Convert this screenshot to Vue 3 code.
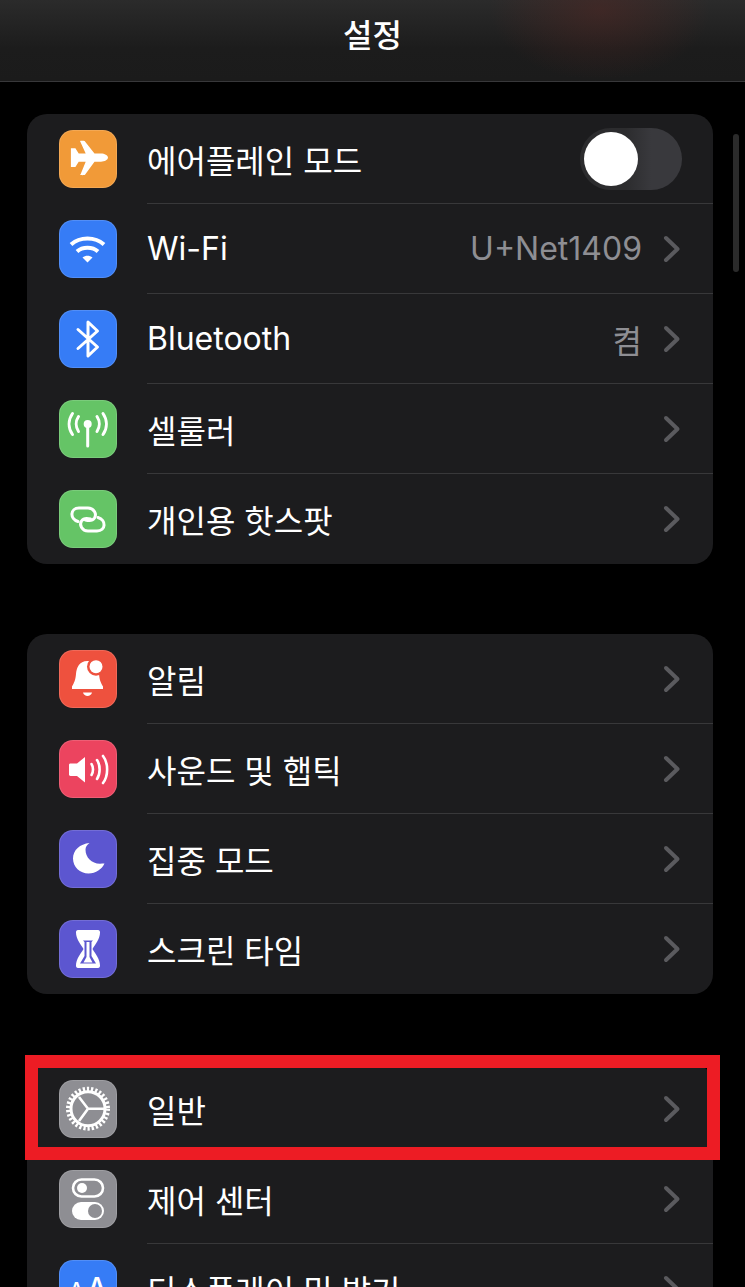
<script setup>
const groups = [
  [
    { icon: 'plane', color: '#f19a38', label: '에어플레인 모드', toggle: true },
    { icon: 'wifi', color: '#367cf6', label: 'Wi-Fi', value: 'U+Net1409' },
    { icon: 'bluetooth', color: '#367cf6', label: 'Bluetooth', value: '켬' },
    { icon: 'cell', color: '#65c466', label: '셀룰러' },
    { icon: 'link', color: '#65c466', label: '개인용 핫스팟' }
  ],
  [
    { icon: 'bell', color: '#ee513e', label: '알림' },
    { icon: 'sound', color: '#ec445f', label: '사운드 및 햅틱' },
    { icon: 'moon', color: '#5c56d0', label: '집중 모드' },
    { icon: 'hourglass', color: '#5c56d0', label: '스크린 타임' }
  ],
  [
    { icon: 'gear', color: '#8e8e93', label: '일반' },
    { icon: 'switches', color: '#8e8e93', label: '제어 센터' },
    { icon: 'display', color: '#367cf6', label: '디스플레이 및 밝기' }
  ]
];
</script>

<template>
  <div class="screen">
    <header class="nav">설정</header>

    <section v-for="(group, g) in groups" :key="g" class="group">
      <div v-for="row in group" :key="row.label" class="row">
        <div class="icon" :style="{ background: row.color }">
          <svg viewBox="0 0 58 58" width="58" height="58">
            <path v-if="row.icon === 'plane'" fill="#fff" d="M49 27.5c0 2.300-3.500 4.200-7 4.200h-6.500L26 44.800c-.4.400-4.600.5-4.600 0l5.300-13.100h-7l-3.300 5.200h-4.500V18.300h4.500l3.300 5.200h7L21 11c0-.5 4.200-.4 4.600 0l9.900 12.500H42c3.500 0 7 1.700 7 4z" />

            <g v-else-if="row.icon === 'wifi'" fill="none" stroke="#fff" stroke-width="4">
              <path d="M12 24.500C21 16.500 36 16.500 45 24.500" />
              <path d="M18 31.500C23.500 26.500 33.500 26.500 39 31.500" />
              <path fill="#fff" stroke="none" d="M23.500 37.500C26.500 35.200 30.500 35.200 33.500 37.500L28.500 42.500z" />
            </g>

            <path v-else-if="row.icon === 'bluetooth'" fill="none" stroke="#fff" stroke-width="3" stroke-linejoin="round" stroke-linecap="round" d="M19 19.500L38.500 37 29 46V12l9.500 9L19 38.500" />

            <g v-else-if="row.icon === 'cell'" fill="none" stroke="#fff" stroke-width="3" stroke-linecap="round">
              <circle cx="28.700" cy="24" r="4" fill="#fff" stroke="none" />
              <path d="M28.700 25V46" />
              <path d="M19.500 16.500C16.500 21 16.500 27 19.500 31.500" />
              <path d="M38 16.500C41 21 41 27 38 31.500" />
              <path d="M13.500 13.500C9 20 9 28 13.500 34.500" />
              <path d="M44 13.500C48.500 20 48.500 28 44 34.500" />
            </g>

            <g v-else-if="row.icon === 'link'" fill="none" stroke="#fff" stroke-width="3" stroke-linecap="round">
              <path d="M19 31.500C10.500 29 11 18 20 18H29C35 18 38 24 35.500 28C33.500 31 30 31 26.500 30" />
              <path d="M39 27.500C47.500 30 47 41 38 41H29C23 41 20 35 22.500 31C24.500 28 28 28 31.500 29" />
            </g>

            <g v-else-if="row.icon === 'bell'">
              <path fill="#fff" d="M28.500 11C20 11 17.500 18 17 24C16.500 30 15 33 13 36.500V39H44V36.500C42 33 40.500 30 40 24C39.500 18 37 11 28.500 11z" />
              <path fill="#fff" d="M24 42.500H33C32 47 25 47 24 42.500z" />
              <circle cx="37" cy="16.700" r="9" fill="#ee513e" />
              <circle cx="37" cy="16.700" r="6.500" fill="#fff" />
            </g>

            <g v-else-if="row.icon === 'sound'">
              <path fill="#fff" d="M26 17V42.500L18 36H11.500C10.500 36 10 35 10 34.500V25C10 24 10.500 23.500 11.500 23.500H18z" />
              <g fill="none" stroke="#fff" stroke-width="2.600" stroke-linecap="round">
                <path d="M32.500 24C34.500 27 34.500 32 32.500 35" />
                <path d="M38 20C41.500 25 41.500 34 38 39" />
                <path d="M44 16C49.500 23 49.500 36 44 43" />
              </g>
            </g>

            <path v-else-if="row.icon === 'moon'" fill="#fff" d="M30.500 13C21 14 14 20 14 28.500C14 37 21 43.500 29.500 43.500C37 43.500 43 39 45.500 33.500C44 33.500 42.500 33.700 41 33.700C32.500 33.700 26.500 27.500 26.500 19.500C26.500 17 28 15 30.500 13z" />

            <g v-else-if="row.icon === 'hourglass'">
              <path fill="#fff" d="M19 10H39C40.500 10 41 11 41 12.500C41 19 36.500 24 33.500 29C36.500 34 41 39 41 45.500C41 47 40.500 48 39 48H19C17.500 48 17 47 17 45.500C17 39 21.500 34 24.500 29C21.500 24 17 19 17 12.500C17 11 17.500 10 19 10z" />
              <path fill="#5c56d0" d="M24 20.500H34L32.500 22V36L37 43.500H21L25.500 36V22z" />
              <path fill="#fff" d="M27.500 22H30.500V37L33.500 42.500H24.500L27.500 37z" />
            </g>

            <g v-else-if="row.icon === 'gear'" fill="none" stroke="#fff">
              <circle cx="29" cy="28.700" r="19.500" stroke-width="5" stroke-dasharray="2.200 1.900" />
              <circle cx="29" cy="28.700" r="17" stroke-width="3" />
              <path stroke-width="2.600" d="M29 28.700L20 17M29 28.700H45M29 28.700L20 41" />
            </g>

            <g v-else-if="row.icon === 'switches'">
              <rect x="14" y="9.500" width="30" height="17" rx="8.500" fill="none" stroke="#fff" stroke-width="2.600" />
              <circle cx="23" cy="18" r="5" fill="#fff" />
              <rect x="13" y="32" width="32" height="18" rx="9" fill="#fff" />
              <circle cx="36" cy="41" r="7" fill="#8e8e93" />
            </g>

            <g v-else-if="row.icon === 'display'" fill="#fff" font-family="Inter, sans-serif" font-weight="500">
              <text x="10" y="38" font-size="21">A</text>
              <text x="28" y="38" font-size="28">A</text>
            </g>
          </svg>
        </div>

        <div class="content">
          <span class="label">{{ row.label }}</span>
          <div v-if="row.toggle" class="toggle">
            <span class="knob"></span>
          </div>
          <template v-else>
            <span v-if="row.value" class="value">{{ row.value }}</span>
            <svg class="chevron" viewBox="0 0 18 28" width="18" height="28">
              <path d="M3 3L14.500 14 3 25" fill="none" stroke="#5a5a5e" stroke-width="4" stroke-linecap="round" stroke-linejoin="round" />
            </svg>
          </template>
        </div>
      </div>
    </section>

    <div class="scrollbar"></div>
    <div class="highlight"></div>
  </div>
</template>

<style scoped>
.screen {
  position: relative;
  width: 745px;
  height: 1287px;
  overflow: hidden;
  background: #000;
  color: #fff;
  font-family: Inter, "Noto Sans CJK KR", sans-serif;
}

.nav {
  height: 81px;
  line-height: 72px;
  text-align: center;
  font-size: 32px;
  font-weight: 500;
  border-bottom: 1px solid #38383a;
  background:
    radial-gradient(ellipse 110px 70px at 600px 10px, rgba(90, 40, 35, 0.45), transparent),
    linear-gradient(#2b2b2b, #1c1c1c 60%, #1b1b1b);
}

.group {
  margin: 32px 32px 70px 27px;
  background: #1c1c1e;
  border-radius: 20px;
  overflow: hidden;
}

.group + .group {
  margin-top: 0;
}

.row {
  display: flex;
  height: 90px;
}

.icon {
  flex: none;
  width: 58px;
  height: 58px;
  margin: 16px 30px 0 32px;
  border-radius: 14px;
  overflow: hidden;
  box-shadow: inset 0 0 0 1px rgba(255, 255, 255, 0.14);
}

.icon svg {
  display: block;
}

.content {
  flex: 1;
  display: flex;
  align-items: center;
  padding-right: 31px;
  border-bottom: 1px solid #38383a;
}

.row:last-child .content {
  border-bottom: none;
}

.label {
  flex: 1;
  font-size: 32px;
  white-space: nowrap;
}

.value {
  margin-right: 21px;
  font-size: 32px;
  color: #8e8e93;
}

.chevron {
  flex: none;
  margin-right: 1px;
}

.toggle {
  width: 102px;
  height: 62px;
  padding: 4px;
  box-sizing: border-box;
  border-radius: 31px;
  background: linear-gradient(90deg, #2c2c2e 45%, #39393d 70%);
}

.knob {
  display: block;
  width: 54px;
  height: 54px;
  border-radius: 50%;
  background: #fff;
}

.scrollbar {
  position: absolute;
  left: 733px;
  top: 134px;
  width: 6px;
  height: 138px;
  border-radius: 3px;
  background: #2b2b2b;
}

.highlight {
  position: absolute;
  left: 25px;
  top: 1055px;
  width: 695px;
  height: 105px;
  box-sizing: border-box;
  border: 13px solid #ed1c24;
}
</style>

<style>
html, body {
  background: #000;
}
</style>
